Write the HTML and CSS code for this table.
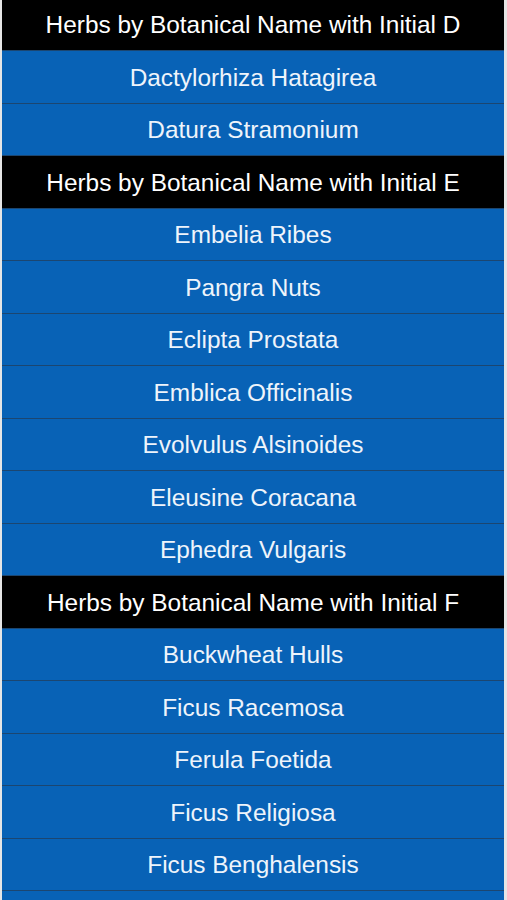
FILE: index.html
```html
<!DOCTYPE html>
<html lang="en">
<head>
  <meta charset="UTF-8">
  <meta name="viewport" content="width=device-width, initial-scale=1.0">
  <title>Herbs by Botanical Name</title>
  <link rel="stylesheet" href="styles.css">
</head>
<body>
  <ul class="herb-list">
    <li class="section">Herbs by Botanical Name with Initial D</li>
    <li class="item">Dactylorhiza Hatagirea</li>
    <li class="item">Datura Stramonium</li>

    <li class="section">Herbs by Botanical Name with Initial E</li>
    <li class="item">Embelia Ribes</li>
    <li class="item">Pangra Nuts</li>
    <li class="item">Eclipta Prostata</li>
    <li class="item">Emblica Officinalis</li>
    <li class="item">Evolvulus Alsinoides</li>
    <li class="item">Eleusine Coracana</li>
    <li class="item">Ephedra Vulgaris</li>

    <li class="section">Herbs by Botanical Name with Initial F</li>
    <li class="item">Buckwheat Hulls</li>
    <li class="item">Ficus Racemosa</li>
    <li class="item">Ferula Foetida</li>
    <li class="item">Ficus Religiosa</li>
    <li class="item">Ficus Benghalensis</li>
    <li class="item"></li>
  </ul>
</body>
</html>
```

FILE: styles.css
```css
body {
    margin: 0;
    padding: 0 3px 0 2px;
    background-color: #e6e6e6;
    font-family: "Liberation Sans", Arial, sans-serif;
    height: 100vh;
    overflow: hidden;
}

.herb-list {
    list-style: none;
    margin: -1.5px 0 0 0;
    padding: 0;
}

.herb-list li {
    height: 49.5px;
    padding-top: 2px;
    display: flex;
    align-items: center;
    justify-content: center;
    font-size: 24.4px;
    border-bottom: 1px solid #1c4670;
    box-sizing: content-box;
}

.section {
    background-color: #000000;
    color: #ffffff;
}

.item {
    background-color: #0862b6;
    color: #eef4fb;
}
```
